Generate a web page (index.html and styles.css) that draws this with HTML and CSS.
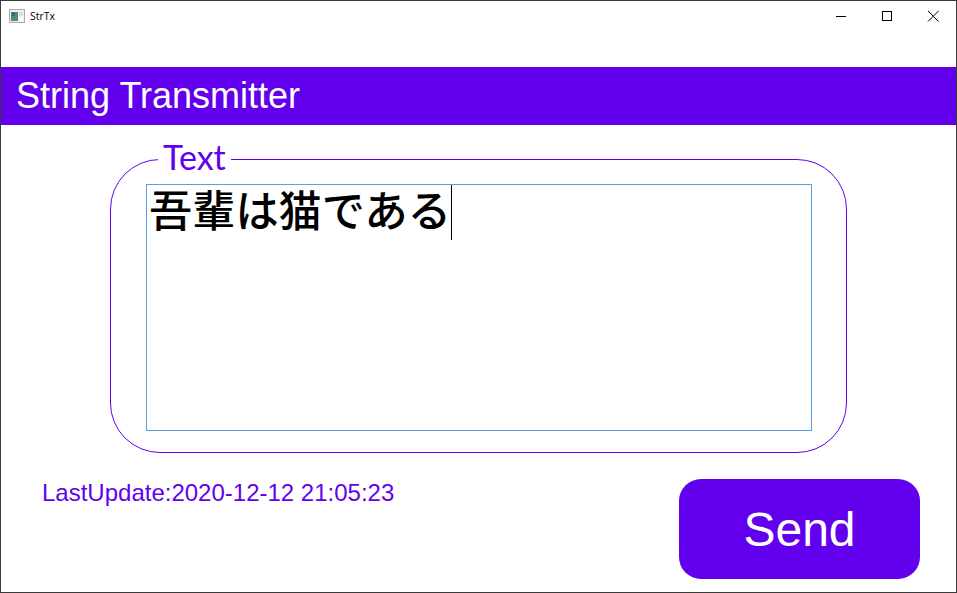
FILE: index.html
```html
<!DOCTYPE html>
<html lang="ja">
<head>
  <meta charset="UTF-8">
  <meta name="viewport" content="width=device-width, initial-scale=1.0">
  <title>StrTx</title>
  <link rel="stylesheet" href="styles.css">
</head>
<body>
  <div class="window">
    <div class="titlebar">
      <div class="app-title">
        <svg class="app-icon" width="16" height="14" viewBox="0 0 16 14">
          <rect x="0.5" y="0.5" width="15" height="13" fill="#f2f2f2" stroke="#a9a9a9"/>
          <rect x="2" y="3" width="7" height="9" fill="#4f8a86"/>
          <rect x="3" y="3" width="3" height="4" fill="#3d6a78"/>
          <rect x="10" y="3" width="4" height="4" fill="#d5dde0"/>
          <rect x="10" y="8" width="4" height="4" fill="#ffffff"/>
        </svg>
        <span>StrTx</span>
      </div>
      <div class="window-buttons">
        <svg width="46" height="30" viewBox="0 0 46 30"><path d="M18 15.500h10" stroke="#000" fill="none"/></svg>
        <svg width="46" height="30" viewBox="0 0 46 30"><rect x="18.500" y="10.500" width="9" height="9" stroke="#000" fill="none"/></svg>
        <svg width="46" height="30" viewBox="0 0 46 30"><path d="M18 10l10.500 10.500M28.500 10L18 20.500" stroke="#000" fill="none"/></svg>
      </div>
    </div>

    <h1 class="header">String Transmitter</h1>

    <fieldset class="text-box">
      <legend>Text</legend>
      <div class="editor">吾輩は猫である<span class="caret"></span></div>
    </fieldset>

    <div class="footer">
      <p class="last-update">LastUpdate:2020-12-12 21:05:23</p>
      <button class="send-button">Send</button>
    </div>
  </div>
</body>
</html>
```
FILE: styles.css
```css
:root {
  --primary-color: #6200ee;
  --editor-border: #5b9fe3;
}

body {
  margin: 0;
  background-color: #fff;
  font-family: "Liberation Sans", Arial, sans-serif;
  overflow: hidden;
}

.window {
  width: 957px;
  height: 593px;
  box-sizing: border-box;
  border: 1px solid #3a3a3a;
  background: #fff;
}

/* title bar */
.titlebar {
  display: flex;
  justify-content: space-between;
  height: 30px;
}

.app-title {
  display: flex;
  align-items: center;
  gap: 5px;
  padding-left: 8px;
  font-family: "Open Sans", sans-serif;
  font-size: 10.5px;
  color: #000;
}

.window-buttons {
  display: flex;
  height: 30px;
}

/* header */
.header {
  margin: 36px 0 0;
  height: 58px;
  padding-left: 15px;
  background-color: var(--primary-color);
  color: #fff;
  font-size: 36px;
  font-weight: normal;
  line-height: 58px;
}

/* text group */
.text-box {
  width: 737px;
  height: 315px;
  box-sizing: border-box;
  margin: 13px 0 0 109px;
  padding: 0 0 0 35px;
  border: 1px solid var(--primary-color);
  border-radius: 50px;
}

.text-box legend {
  margin-left: 12px;
  padding: 0 5px 4px;
  color: var(--primary-color);
  font-family: Lato, sans-serif;
  font-size: 34px;
  line-height: 38px;
}

.editor {
  width: 666px;
  height: 247px;
  box-sizing: border-box;
  margin-top: 4px;
  padding: 0 0 0 2px;
  border: 1px solid var(--editor-border);
  font-family: "Noto Sans CJK JP", sans-serif;
  font-size: 43.2px;
  font-weight: 500;
  line-height: 46px;
  color: #000;
}

.caret {
  display: inline-block;
  width: 1px;
  height: 55px;
  background: #000;
  vertical-align: top;
}

/* footer */
.footer {
  display: flex;
  justify-content: space-between;
  align-items: flex-start;
  padding: 26px 36px 0 41px;
}

.last-update {
  margin: 0;
  color: var(--primary-color);
  font-size: 24px;
  line-height: 28px;
}

.send-button {
  width: 241px;
  height: 100px;
  border: none;
  border-radius: 22px;
  background-color: var(--primary-color);
  color: #fff;
  font-family: inherit;
  font-size: 48px;
}
```
